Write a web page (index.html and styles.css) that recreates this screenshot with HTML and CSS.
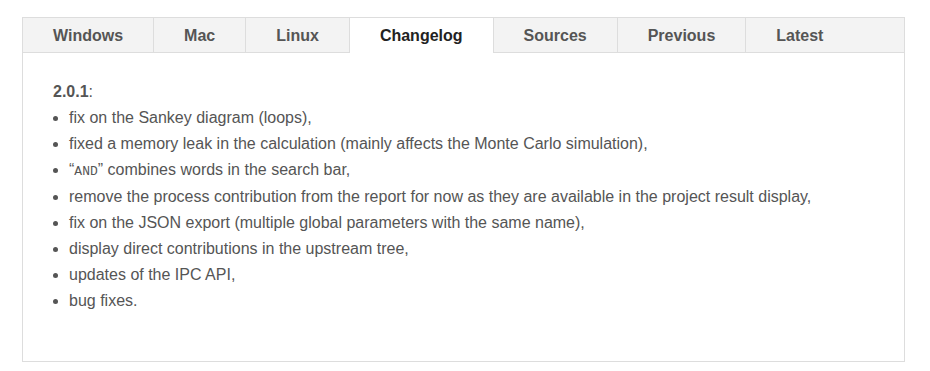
FILE: index.html
```html
<!DOCTYPE html>
<html lang="en">

<head>
    <meta charset="UTF-8">
    <meta name="viewport" content="width=device-width, initial-scale=1.0">
    <link rel="stylesheet" href="styles.css">
    <title>Downloads</title>
</head>

<body>
    <div class="downloads">
        <ul class="tabs">
            <li>Windows</li>
            <li>Mac</li>
            <li>Linux</li>
            <li class="active">Changelog</li>
            <li>Sources</li>
            <li>Previous</li>
            <li>Latest</li>
        </ul>

        <div class="panel">
            <p><b>2.0.1</b>:</p>
            <ul class="changes">
                <li>fix on the Sankey diagram (loops),</li>
                <li>fixed a memory leak in the calculation (mainly affects the Monte Carlo simulation),</li>
                <li>&ldquo;<code>AND</code>&rdquo; combines words in the search bar,</li>
                <li>remove the process contribution from the report for now as they are available in the project result display,</li>
                <li>fix on the JSON export (multiple global parameters with the same name),</li>
                <li>display direct contributions in the upstream tree,</li>
                <li>updates of the IPC API,</li>
                <li>bug fixes.</li>
            </ul>
        </div>
    </div>
</body>

</html>
```

FILE: styles.css
```css
body {
    margin: 0;
    background-color: #fff;
    font-family: "Liberation Sans", Arial, sans-serif;
    color: #555;
}

.downloads {
    margin: 17px 25px 0 22px;
    border: 1px solid #ddd;
}

.tabs {
    display: flex;
    margin: 0;
    padding: 0;
    list-style: none;
    background-color: #f3f3f3;
    border-bottom: 1px solid #ddd;
}

.tabs li {
    padding: 1px 30px 0;
    height: 33px;
    line-height: 34px;
    font-size: 16px;
    font-weight: bold;
    color: #555;
}

.tabs li + li {
    border-left: 1px solid #ddd;
}

.tabs li.active {
    background-color: #fff;
    color: #222;
    border-right: 1px solid #ddd;
    height: 34px;
    margin-bottom: -1px;
}

.tabs li.active + li {
    border-left: none;
}

.panel {
    padding: 26px 30px 47px;
    font-size: 16px;
    line-height: 26.15px;
}

.panel p {
    margin: 0;
}

.changes {
    margin: 0;
    padding-left: 16px;
}

.changes code {
    font-family: "Courier New", "Liberation Mono", monospace;
    font-size: 13px;
    line-height: 1;
}
```
